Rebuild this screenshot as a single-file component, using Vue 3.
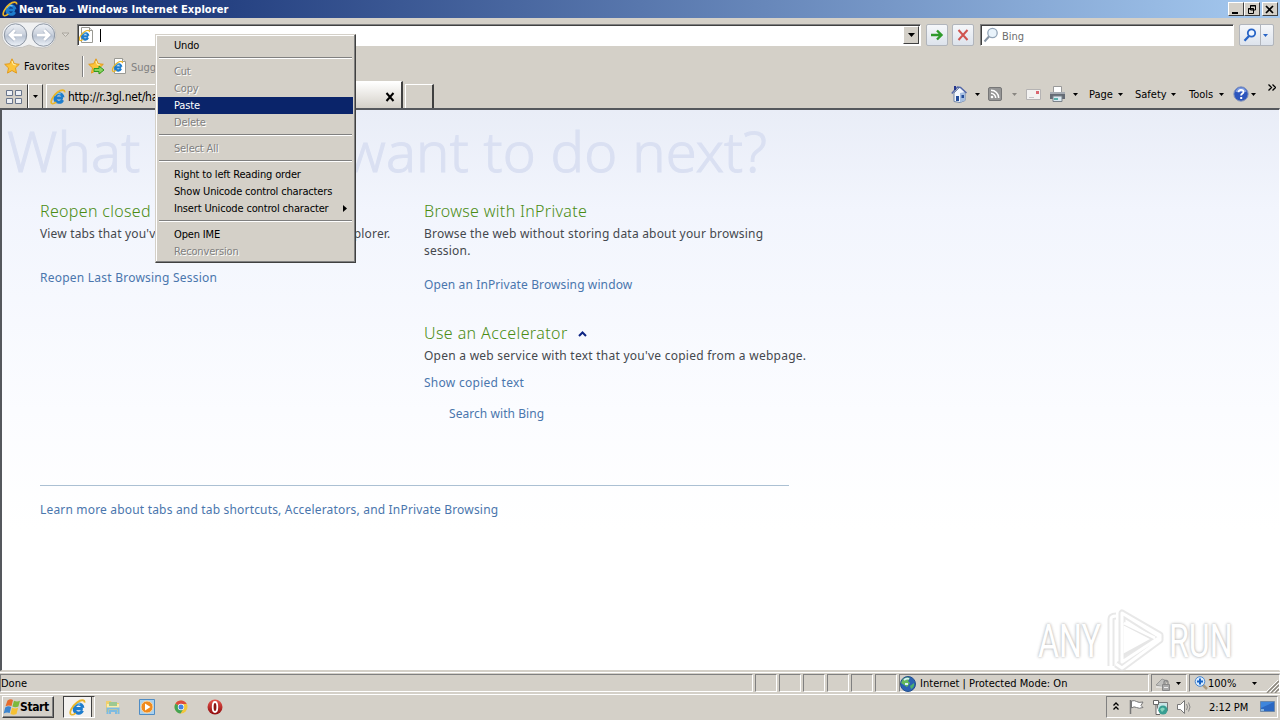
<script setup>
const menu = [
  { label: 'Undo' },
  { sep: true },
  { label: 'Cut', off: true },
  { label: 'Copy', off: true },
  { label: 'Paste', active: true },
  { label: 'Delete', off: true },
  { sep: true },
  { label: 'Select All', off: true },
  { sep: true },
  { label: 'Right to left Reading order' },
  { label: 'Show Unicode control characters' },
  { label: 'Insert Unicode control character', sub: true },
  { sep: true },
  { label: 'Open IME' },
  { label: 'Reconversion', off: true },
];
</script>

<template>
  <div class="screen">
    <!-- shared icons -->
    <svg class="defs" width="0" height="0">
      <defs>
        <linearGradient id="ball" x1="0" y1="0" x2="0" y2="1">
          <stop offset="0" stop-color="#eef1f6" />
          <stop offset="0.45" stop-color="#ccd3de" />
          <stop offset="0.55" stop-color="#bac4d3" />
          <stop offset="1" stop-color="#eef3f9" />
        </linearGradient>
        <linearGradient id="opera" x1="0" y1="0" x2="0" y2="1">
          <stop offset="0" stop-color="#e8564e" />
          <stop offset="1" stop-color="#8f0a0c" />
        </linearGradient>
        <symbol id="ie" viewBox="0 0 16 16">
          <path d="M13 9H5.200M5 9a4 4 0 0 1 8-.6M5 9a4 4 0 0 0 7.600 2" fill="none" stroke="#1d7ccd" stroke-width="3" />
          <path d="M4.600 6.800a4.600 4.600 0 0 1 6-2" fill="none" stroke="#6fc3f4" stroke-width="1.400" />
          <path d="M2 14.600C-.4 13 3 6.500 7.500 3.200 11 .7 15 .2 14.600 3.400" fill="none" stroke="#eab528" stroke-width="1.700" />
          <path d="M2 14.600c1.300.6 3-.4 4.300-1.400" fill="none" stroke="#eab528" stroke-width="1.500" />
        </symbol>
        <symbol id="iepage" viewBox="0 0 16 16">
          <path d="M3.500.5h8l3 3v12h-11z" fill="#fff" stroke="#9a9a94" />
          <path d="M11.500.5v3h3" fill="#e8e8e8" stroke="#9a9a94" />
          <use href="#ie" x="0.500" y="2.500" width="12" height="12" />
        </symbol>
        <symbol id="star" viewBox="0 0 16 16">
          <path d="M8 .8l2.200 4.900 5.100.6-3.800 3.600 1 5.200L8 12.500l-4.500 2.600 1-5.200L.7 6.300l5.100-.6z" fill="#fcc43a" stroke="#e29a1c" />
          <path d="M8 3l1.300 3.500 2.500.4" fill="none" stroke="#fff3b4" />
        </symbol>
      </defs>
    </svg>

    <header class="titlebar">
      <svg width="16" height="16"><use href="#ie" /></svg>
      <span class="title">New Tab - Windows Internet Explorer</span>
      <div class="winbtns">
        <button><svg width="13" height="11"><path d="M3 8h6v2H3z" /></svg></button>
        <button><svg width="13" height="11"><path d="M5.500 1.500h5v4.500h-5zM5 2h6M3.500 4.500h5v5h-5zM3 5h6" fill="#d4d0c8" stroke="#000" /></svg></button>
        <button class="close"><svg width="13" height="11"><path d="M3 2l7 7M10 2L3 9" stroke="#000" stroke-width="1.700" /></svg></button>
      </div>
    </header>

    <div class="navrow">
      <svg class="backfwd" width="58" height="28">
        <path d="M15 1h28a13 13 0 0 1 0 26q-8 0-14-3-6 3-14 3A13 13 0 0 1 15 1z" fill="#f0f1f2" stroke="#c6c4c0" />
        <circle cx="15.500" cy="14" r="11.200" fill="url(#ball)" stroke="#8c95a2" />
        <circle cx="43.500" cy="14" r="11.200" fill="url(#ball)" stroke="#8c95a2" />
        <path d="M22 14H10.500M15 9l-5 5 5 5" fill="none" stroke="#a3aec0" stroke-width="4" />
        <path d="M22 14H10.500M15 9l-5 5 5 5" fill="none" stroke="#fff" stroke-width="2.800" />
        <path d="M37 14h11.500M44 9l5 5-5 5" fill="none" stroke="#a3aec0" stroke-width="4" />
        <path d="M37 14h11.500M44 9l5 5-5 5" fill="none" stroke="#fff" stroke-width="2.800" />
      </svg>
      <svg class="hist" width="9" height="6"><path d="M1 1h7L4.500 4.500z" fill="#dedbd5" stroke="#aaa69e" /></svg>
      <div class="address">
        <svg width="16" height="16"><use href="#iepage" /></svg>
        <i class="caret"></i>
        <button class="drop"><svg width="7" height="4"><path d="M0 0h7L3.500 4z" /></svg></button>
      </div>
      <button class="flat go"><svg width="14" height="14"><path d="M1 7h10M7 2.500L11.500 7 7 11.500" fill="none" stroke="#2f9a2c" stroke-width="2.400" /></svg></button>
      <button class="flat stop"><svg width="14" height="14"><path d="M2.500 2l9 10M11.500 2l-9 10" fill="none" stroke="#d0544f" stroke-width="2" /></svg></button>
      <div class="search">
        <svg width="16" height="16"><circle cx="9.500" cy="6" r="4.700" fill="#e9f3fb" stroke="#93a5b8" stroke-width="1.300" /><path d="M6 9.500L1.500 14.500" stroke="#8795a5" stroke-width="2" /></svg>
        <span>Bing</span>
      </div>
      <div class="flat searchbtn">
        <svg width="14" height="14"><circle cx="8.500" cy="5" r="3.700" fill="#eef5ff" stroke="#2764c6" stroke-width="1.800" /><path d="M6 8l-4.500 4.700" stroke="#2764c6" stroke-width="2.300" /></svg>
        <i></i>
        <svg width="5" height="3"><path d="M0 0h5L2.500 3z" fill="#2764c6" /></svg>
      </div>
    </div>

    <div class="favrow">
      <svg width="16" height="16"><use href="#star" /></svg>
      <span class="fav">Favorites</span>
      <i class="bar"></i>
      <svg class="addfav" width="17" height="17">
        <use href="#star" width="16" height="16" />
        <path d="M6 10.500h5v-2.500l5 4-5 4v-2.500H6z" fill="#8ad35f" stroke="#2d9a1c" />
      </svg>
      <svg class="sugicon" width="16" height="16"><use href="#iepage" /></svg>
      <span class="sug">Suggested Sites</span>
    </div>

    <div class="tabrow">
      <div class="quick">
        <svg width="16" height="14" fill="#eef1f6" stroke="#69758c"><path d="M.5.5h6v5h-6zM9.500.5h6v5h-6zM.5 8.500h6v5h-6zM9.500 8.500h6v5h-6z" /></svg>
      </div>
      <div class="quickdrop"><svg width="5" height="3"><path d="M0 0h5L2.500 3z" /></svg></div>
      <div class="tab">
        <svg width="16" height="16"><use href="#ie" /></svg>
        <span>http://r.3gl.net/hawk</span>
      </div>
      <div class="tab current">
        <svg width="10" height="10"><path d="M1.500 1l7 8M8.500 1l-7 8" stroke="#000" stroke-width="2" /></svg>
      </div>
      <div class="newtab"></div>

      <div class="commands">
        <svg class="home" width="17" height="18">
          <path d="M3 8v8.500l6 1 5-2V7L9 2z" fill="#f2f6fc" stroke="#7286a8" />
          <path d="M9 8l5-1v8.500l-5 2z" fill="#a6bee0" />
          <path d="M.8 8.500L6.500 2l3 .5 6 5.500" fill="none" stroke="#5468a8" stroke-width="1.600" />
          <path d="M3 1h2v4H3z" fill="#26368d" />
          <path d="M5 11h3v5H5zM10.500 10h2.500v3h-2.500z" fill="#244d9a" />
        </svg>
        <svg class="dd" width="5" height="3"><path d="M0 0h5L2.500 3z" /></svg>
        <svg class="rss" width="14" height="14">
          <rect x=".5" y=".5" width="13" height="13" rx="1.500" fill="#969696" stroke="#777" />
          <circle cx="4" cy="10" r="1.300" fill="#fff" />
          <path d="M3 6.300a4.700 4.700 0 0 1 4.700 4.700M3 3.300A7.700 7.700 0 0 1 10.700 11" fill="none" stroke="#fff" stroke-width="1.500" />
        </svg>
        <svg class="dd dim" width="5" height="3"><path d="M0 0h5L2.500 3z" /></svg>
        <svg class="mail" width="15" height="11"><path d="M.5.500h14v10H.5z" fill="#f3f2f1" stroke="#b5b3b3" /><path d="M3 8.500h5" stroke="#c5c5c8" /><path d="M10 2h3v3h-3z" fill="#da6670" /></svg>
        <svg class="print" width="17" height="17">
          <path d="M4.500.5h8v6h-8z" fill="#fff" stroke="#999" />
          <path d="M1 6h15v7H1z" fill="#656b75" />
          <path d="M1 6h15v2H1z" fill="#a7acb3" />
          <path d="M4 10h9v5.500H4z" fill="#dbe9f2" stroke="#7b8289" />
          <path d="M5 13h4" stroke="#2f9c94" stroke-width="1.500" />
        </svg>
        <svg class="dd d3" width="5" height="3"><path d="M0 0h5L2.500 3z" /></svg>
        <span class="page">Page</span>
        <svg class="dd d4" width="5" height="3"><path d="M0 0h5L2.500 3z" /></svg>
        <span class="safety">Safety</span>
        <svg class="dd d4" width="5" height="3"><path d="M0 0h5L2.500 3z" /></svg>
        <span class="tools">Tools</span>
        <svg class="dd d4" width="5" height="3"><path d="M0 0h5L2.500 3z" /></svg>
        <svg class="help" width="16" height="16">
          <circle cx="8" cy="8" r="7.200" fill="#2c55bd" stroke="#8796ba" />
          <path d="M2.500 6a5.500 4.500 0 0 1 11 0z" fill="#7c9ae0" />
          <path d="M5.500 6.300c0-3.300 5-3.200 5-.4 0 1.700-2.400 1.700-2.400 3.700" fill="none" stroke="#fff" stroke-width="1.800" />
          <path d="M7.200 11h2v2h-2z" fill="#fff" />
        </svg>
        <svg class="dd d5" width="5" height="3"><path d="M0 0h5L2.500 3z" /></svg>
        <svg class="more" width="8" height="7"><path d="M.5.500l3 3-3 3M4.500.5l3 3-3 3" fill="none" stroke="#000" stroke-width="1.300" /></svg>
      </div>
    </div>

    <main class="page-body">
      <h1>What do you want to do next?</h1>
      <div class="cols">
        <section class="col1">
          <h2>Reopen closed tabs</h2>
          <p class="view">View tabs that you've closed since opening Internet Explorer.</p>
          <a class="a-reopen">Reopen Last Browsing Session</a>
        </section>
        <section class="col2">
          <h2>Browse with InPrivate</h2>
          <p>Browse the web without storing data about your browsing<br>session.</p>
          <a class="a-inp">Open an InPrivate Browsing window</a>
          <h2 class="h-acc">Use an Accelerator <svg width="9" height="6"><path d="M1 5l3.500-3.500L8 5" fill="none" stroke="#0c2383" stroke-width="2" /></svg></h2>
          <p class="p-acc">Open a web service with text that you've copied from a webpage.</p>
          <a class="a-show">Show copied text</a>
          <a class="a-bing">Search with Bing</a>
        </section>
      </div>
      <div class="learn"><a>Learn more about tabs and tab shortcuts, Accelerators, and InPrivate Browsing</a></div>

      <div class="watermark">
        <span class="any">ANY</span>
        <svg width="58" height="66" viewBox="0 0 58 66">
          <g fill="none" stroke-linejoin="round">
            <path d="M5 58V11q0-3 5-3M16 5v49l38-25zM16 5l38 22v5L16 60l-6-4" stroke="#d9d9d9" stroke-width="7" opacity=".6" />
            <path d="M16 15l31 16L16 48z" fill="#fff" stroke="#e6e6e6" stroke-width="3" />
            <path d="M5 58V11q0-3 5-3M16 5v49l38-25zM16 5l38 22v5L16 60l-6-4M18 15l31 15" stroke="#fff" stroke-width="3" />
          </g>
        </svg>
        <span class="run">RUN</span>
      </div>
    </main>

    <footer class="status">
      <div class="pane done">Done</div>
      <div v-for="n in 6" :key="n" class="pane small"></div>
      <div class="pane zone">
        <svg width="16" height="16">
          <circle cx="8" cy="8" r="7.500" fill="#2b62b4" stroke="#234f8d" />
          <path d="M3 3q4-3 7-1l-2 3 2 2-3 4-3-2-3-2z" fill="#64b95b" />
          <path d="M10 10l4-3q1 4-3 6z" fill="#4eaf6e" />
          <path d="M4 4q3-2 5-1M5 8h3" stroke="#d5f0fb" fill="none" stroke-width="1.800" />
        </svg>
        <span>Internet | Protected Mode: On</span>
      </div>
      <div class="pane lock">
        <svg width="17" height="16">
          <path d="M1 9l6-6 5 2-4 6z" fill="#c0c0be" stroke="#9a9a98" />
          <path d="M1 11h7" stroke="#f5f5f5" />
          <path d="M7.500 8.500h7v6h-7z" fill="#aaa" stroke="#888" />
          <path d="M9 8V6.500a2 2 0 0 1 4 0V8" fill="none" stroke="#888" stroke-width="1.300" />
          <path d="M9 11.500h4" stroke="#eee" />
        </svg>
        <svg width="5" height="3"><path d="M0 0h5L2.500 3z" /></svg>
      </div>
      <div class="pane zoom">
        <svg width="14" height="15"><path d="M9 9l4 4" stroke="#ae9c80" stroke-width="2.500" /><circle cx="6" cy="5.500" r="4.800" fill="#d9ecff" stroke="#4785ce" /><path d="M3 5.500h6M6 2.500v6" stroke="#1561c4" stroke-width="2" /></svg>
        <span>100%</span>
        <svg class="zd" width="5" height="3"><path d="M0 0h5L2.500 3z" /></svg>
        <svg class="grip" width="13" height="13"><path d="M1 13L13 1M5 13l8-8M9 13l4-4" stroke="#8a867e" stroke-width="1.500" /><path d="M0 12L12 0M4 12l9-9M8 12l5-5" stroke="#fff" /></svg>
      </div>
    </footer>

    <div class="taskbar">
      <button class="start">
        <svg width="18" height="16">
          <path d="M4.500 1.500q3-2 5.500-.5L8.500 7q-3-1.300-6 .3z" fill="#e66b2c" />
          <path d="M11 1.800q3 1.500 6 0l-1.600 5.800q-3 1.500-6 0z" fill="#7cb93d" />
          <path d="M2.200 8.500q3-2 6-.5l-1.500 6q-3-1.300-6 .5z" fill="#3c85cf" />
          <path d="M9 8.800q3 1.500 6.100 0L13.500 15q-3 1.500-6 0z" fill="#f6c132" />
        </svg>
        <span>Start</span>
      </button>
      <div class="running"><div class="runin"><svg width="17" height="17"><use href="#ie" /></svg></div></div>
      <svg class="explorer" width="16" height="16">
        <path d="M1 2h5l1 2h7v9H1z" fill="#f0cf6c" />
        <path d="M2 5h12v5H2z" fill="#fbeba9" />
        <path d="M4 3h8v4H4z" fill="#9cc992" />
        <path d="M2.500 15v-5.500h11V15M5 15v-3h6v3" fill="none" stroke="#7dbbe2" stroke-width="2" />
      </svg>
      <svg class="wmp" width="16" height="16">
        <path d="M.5.5h15v15H.5z" fill="#a9d1ef" stroke="#4f8cc4" />
        <circle cx="8" cy="8" r="6" fill="#f08a1d" stroke="#fbd7a5" />
        <path d="M6 4.500v7L11.500 8z" fill="#fff" />
      </svg>
      <svg class="chrome" width="14" height="14" viewBox="0 0 14 14">
        <circle cx="7" cy="7" r="6.500" fill="#f2c63c" />
        <path d="M7 7L1.400 3.700A6.500 6.500 0 0 1 12.700 4H7z" fill="#dd4b3e" />
        <path d="M7 7L1.400 3.700A6.500 6.500 0 0 0 6.500 13.500L9.600 8.500z" fill="#44a354" />
        <circle cx="7" cy="7" r="3.200" fill="#fff" />
        <circle cx="7" cy="7" r="2.500" fill="#4482e2" />
      </svg>
      <svg class="op" width="16" height="16"><circle cx="8" cy="8" r="7.500" fill="url(#opera)" /><ellipse cx="8" cy="8" rx="2.300" ry="5" fill="#8c1512" stroke="#fff" stroke-width="1.800" /></svg>

      <div class="tray">
        <svg class="chev" width="6" height="8"><path d="M.5 3.500L3 1l2.500 2.500M.5 7.500L3 5l2.500 2.500" fill="none" stroke="#000" stroke-width="1.300" /></svg>
        <svg class="flag" width="17" height="16"><path d="M2.500 1v14" stroke="#777" stroke-width="1.500" /><path d="M3.500 2q3-1 5 .5t6.500.5l-2 3.500 2 2q-4 1.500-6.500 0t-5 .5z" fill="#fff" stroke="#777" /></svg>
        <svg class="net" width="17" height="16">
          <path d="M5.500 3.500h10v8h-10z" fill="#c8e6e6" stroke="#777" />
          <path d="M1.500 1.500h5v4h-5zM4 6v9.500h4" fill="#fff" stroke="#666" />
          <circle cx="11" cy="11" r="4.500" fill="#389e92" /><path d="M8 10q3-3 5 0l-3 3z" fill="#84d4bc" />
        </svg>
        <svg class="vol" width="17" height="16"><path d="M1.500 5.500h3l4-4v13l-4-4h-3z" fill="#fff" stroke="#777" /><path d="M10.500 5q2 3 0 6M12.500 3.500q3 4.500 0 9" fill="none" stroke="#888" /></svg>
        <span>2:12 PM</span>
        <svg class="desk" width="15" height="12"><path d="M.5.500h14v10H.5z" fill="#2b68c2" stroke="#6d88a8" /><path d="M1 1h13L1 7z" fill="#3f86dc" /><path d="M1 9h3" stroke="#dff" /></svg>
      </div>
    </div>

    <div class="menu">
      <template v-for="(m, i) in menu" :key="i">
        <div v-if="m.sep" class="sep"></div>
        <div v-else class="item" :class="{ off: m.off, active: m.active }">
          <span>{{ m.label }}</span>
          <svg v-if="m.sub" width="4" height="7"><path d="M0 0v7L4 3.500z" /></svg>
        </div>
      </template>
    </div>
  </div>
</template>

<style>
body {
  margin: 0;
  overflow: hidden;
}
</style>

<style scoped>
.screen {
  position: relative;
  width: 1280px;
  height: 720px;
  overflow: hidden;
  display: flex;
  flex-direction: column;
  background: #d4d0c8;
  color: #000;
  font: 11px/14px Tahoma, "DejaVu Sans Condensed", "DejaVu Sans", sans-serif;
  letter-spacing: 0;
  white-space: nowrap;
}
.screen * {
  box-sizing: border-box;
}
svg {
  display: block;
  flex: none;
}
.defs {
  position: absolute;
}
button {
  padding: 0;
  font: inherit;
  letter-spacing: inherit;
  color: inherit;
}
.titlebar {
  height: 18px;
  flex: none;
  display: flex;
  align-items: center;
  padding: 0 2px;
  background: linear-gradient(90deg, #0a246a, #a6caf0);
  color: #fff;
}
.title {
  font-weight: bold;
  margin: 1px 0 0 1px;
  letter-spacing: 0.06px;
}
.winbtns {
  margin-left: auto;
  display: flex;
}
.winbtns button {
  width: 16px;
  height: 14px;
  border: 1px solid;
  border-color: #fff #404040 #404040 #fff;
  background: #d4d0c8;
}
.winbtns .close {
  margin-left: 2px;
}
.navrow {
  height: 34px;
  flex: none;
  display: flex;
  align-items: center;
}
.hist {
  margin-left: 3px;
}
.address {
  display: flex;
  align-items: center;
  width: 844px;
  height: 22px;
  margin-left: 7px;
  padding: 0 1px 0 0;
  background: #fff;
  border: 1px solid;
  border-color: #808080 #fff #fff #808080;
  box-shadow: inset 1px 1px #404040;
}
.caret {
  width: 1px;
  height: 13px;
  margin-left: 6px;
  background: #000;
}
.drop {
  display: flex;
  align-items: center;
  justify-content: center;
  width: 16px;
  height: 18px;
  margin-left: auto;
  background: #d4d0c8;
  border: 1px solid;
  border-color: #fff #404040 #404040 #fff;
}
.flat {
  display: flex;
  align-items: center;
  justify-content: center;
  width: 22px;
  height: 22px;
  border: 1px solid #b1b5bc;
  border-radius: 2px;
  background: linear-gradient(#f5f7fa, #dde3ec);
}
.go {
  margin-left: 5px;
}
.stop {
  margin-left: 4px;
}
.search {
  display: flex;
  align-items: center;
  width: 254px;
  height: 22px;
  margin-left: 6px;
  padding-left: 2px;
  background: #fff;
  border: 1px solid;
  border-color: #808080 #fff #fff #808080;
  box-shadow: inset 1px 1px #404040;
  color: #6d6d6d;
}
.search span {
  margin: 3px 0 0 3px;
}
.searchbtn {
  width: 35px;
  margin-left: 5px;
  justify-content: space-between;
  padding: 0 5px 0 3px;
}
.searchbtn i {
  width: 1px;
  height: 20px;
  margin-left: 1px;
  background: #b1b5bc;
}
.favrow {
  height: 28px;
  flex: none;
  display: flex;
  align-items: center;
  padding-left: 4px;
}
.fav {
  width: 47px;
  margin: 1px 0 0 4px;
  letter-spacing: 0.1px;
}
.bar {
  width: 2px;
  height: 21px;
  margin-left: 11px;
  border-left: 1px solid #808080;
  border-right: 1px solid #fff;
}
.addfav {
  margin-left: 4px;
}
.sugicon {
  margin-left: 6px;
}
.sug {
  margin: 3px 0 0 4px;
  color: #808080;
}
.tabrow {
  height: 28px;
  flex: none;
  display: flex;
  align-items: flex-end;
}
.quick,
.quickdrop,
.newtab {
  height: 24px;
  display: flex;
  align-items: center;
  justify-content: center;
  border-top: 1px solid #fff;
  border-right: 1px solid #404040;
}
.quick {
  width: 28px;
}
.quickdrop {
  width: 15px;
  border-left: 1px solid #fff;
}
.newtab {
  width: 29px;
  margin-left: 2px;
  border-left: 1px solid #fff;
  border-right-width: 2px;
}
.tab {
  display: flex;
  align-items: center;
  height: 24px;
  width: 173px;
  margin-left: 3px;
  padding-left: 3px;
  overflow: hidden;
  border-top: 1px solid #fff;
  border-left: 1px solid #fff;
}
.tab span {
  margin: 1px 0 0 2px;
  font-size: 12px;
  letter-spacing: -0.25px;
}
.current {
  height: 27px;
  width: 184px;
  margin-left: 0;
  justify-content: flex-end;
  padding: 3px 6px 0 0;
  background: linear-gradient(#fff, #d4d0c8);
  border-right: 2px solid #404040;
}
.commands {
  display: flex;
  align-items: center;
  height: 28px;
  margin-left: auto;
  padding-right: 4px;
}
.dd {
  margin-left: 7px;
}
.rss {
  margin-left: 8px;
}
.dim {
  margin-left: 10px;
  opacity: 0.35;
}
.mail {
  margin-left: 9px;
}
.print {
  margin-left: 8px;
}
.d3 {
  margin-left: 7px;
}
.page {
  width: 25px;
  margin: 1px 0 0 11px;
}
.safety {
  width: 32px;
  margin: 1px 0 0 12px;
}
.tools {
  width: 26px;
  margin: 1px 0 0 13px;
}
.d4 {
  margin-left: 4px;
}
.help {
  margin-left: 9px;
}
.d5 {
  margin-left: 2px;
}
.more {
  margin: 0 0 13px 12px;
}
.page-body {
  position: relative;
  flex: none;
  height: 563px;
  border-top: 2px solid #55585d;
  border-left: 2px solid #55585d;
  border-right: 1px solid #fff;
  border-bottom: 1px solid #d4d0c8;
  background: linear-gradient(#e9edf7, #f2f5fd 100px, #fbfcff 300px, #fff 420px);
  font-family: "Segoe UI", "Noto Sans", sans-serif;
  font-size: 12px;
  line-height: 17px;
  letter-spacing: 0.2px;
  color: #45484d;
}
h1 {
  margin: 0 0 0 5px;
  height: 82px;
  font-size: 56px;
  line-height: 80px;
  font-weight: 300;
  color: #dae0f2;
  letter-spacing: 0.15px;
  -webkit-text-stroke: 1px #dae0f2;
}
h2 {
  margin: 0;
  font-size: 16px;
  line-height: 22px;
  font-weight: 300;
  letter-spacing: 0.32px;
  color: #4a8c13;
}
p {
  margin: 3px 0 0;
}
a {
  display: block;
  color: #4a76ad;
}
.cols {
  display: grid;
  grid-template-columns: 384px 400px;
  padding: 8px 0 0 38px;
}
.view {
  letter-spacing: 0.16px;
}
.a-reopen {
  margin-top: 27px;
  letter-spacing: 0.23px;
}
.a-inp {
  margin-top: 17px;
  letter-spacing: 0.11px;
}
.h-acc {
  display: flex;
  align-items: center;
  margin-top: 29px;
  letter-spacing: 0.4px;
}
.h-acc svg {
  margin: 2px 0 0 10px;
}
.p-acc {
  letter-spacing: 0.25px;
}
.a-show {
  margin-top: 10px;
  letter-spacing: 0.27px;
}
.a-bing {
  margin: 14px 0 0 25px;
  letter-spacing: 0.06px;
}
.learn {
  width: 749px;
  margin: 63px 0 0 38px;
  padding-top: 15px;
  border-top: 1px solid #abc0d3;
  letter-spacing: 0.18px;
}
.watermark {
  position: absolute;
  left: 1036px;
  top: 498px;
  display: flex;
  align-items: center;
  height: 66px;
  font: 46px/46px Roboto, sans-serif;
  letter-spacing: 0;
  color: #fff;
  text-shadow: 0 0 3px #bbb, 0 0 4px #ccc;
}
.watermark span {
  width: 64px;
  transform-origin: left center;
  transform: scaleX(0.7);
}
.watermark svg {
  margin: 0 5px 0 4px;
}
.status {
  flex: none;
  height: 20px;
  display: flex;
  gap: 2px;
  padding-top: 1px;
  margin-top: 1px;
  border-top: 1px solid #fff;
}
.pane {
  display: flex;
  align-items: center;
  height: 18px;
  padding-top: 1px;
  border: 1px solid;
  border-color: #808080 #fff #fff #808080;
}
.done {
  width: 753px;
}
.small {
  width: 22px;
}
.zone {
  width: 250px;
  padding-left: 0;
}
.zone span {
  margin-left: 4px;
  letter-spacing: 0.02px;
}
.lock {
  width: 36px;
  padding-left: 3px;
  gap: 4px;
}
.zoom {
  flex: 1;
  padding-left: 4px;
}
.zd {
  margin-left: 16px;
}
.grip {
  margin: 5px 0 0 auto;
}
.taskbar {
  flex: none;
  height: 25px;
  display: flex;
  align-items: center;
  margin-top: 2px;
  border-top: 1px solid #fff;
}
.start {
  display: flex;
  align-items: center;
  width: 52px;
  height: 22px;
  margin-left: 2px;
  background: #d4d0c8;
  border: 1px solid;
  border-color: #fff #404040 #404040 #fff;
  box-shadow: inset -1px -1px #808080;
  font-weight: bold;
}
.start span {
  margin: 0 0 0 -1px;
  font-size: 12px;
  letter-spacing: -0.4px;
}
.running {
  width: 32px;
  height: 22px;
  margin-left: 9px;
  border: 1px solid;
  border-color: #404040 #fff #fff #404040;
}
.runin {
  display: flex;
  align-items: center;
  width: 28px;
  height: 20px;
  padding-left: 5px;
  background: #f4f2ef;
  border-right: 1px solid #404040;
}
.explorer {
  margin-left: 10px;
}
.wmp {
  margin-left: 18px;
}
.chrome {
  margin-left: 19px;
}
.op {
  margin-left: 19px;
}
.tray {
  display: flex;
  align-items: center;
  width: 172px;
  height: 22px;
  margin: 0 2px 0 auto;
  border: 1px solid;
  border-color: #808080 #fff #fff #808080;
}
.chev {
  margin: 0 0 2px 6px;
}
.flag {
  margin-left: 9px;
}
.net {
  margin-left: 7px;
}
.vol {
  margin-left: 7px;
}
.tray span {
  width: 40px;
  margin: 1px 0 0 16px;
  letter-spacing: -0.1px;
}
.desk {
  margin-left: 11px;
}
.menu {
  position: absolute;
  left: 155px;
  top: 34px;
  width: 201px;
  height: 229px;
  padding: 2px;
  background: #d4d0c8;
  border: 1px solid;
  border-color: #d4d0c8 #404040 #404040 #d4d0c8;
  box-shadow: inset -1px -1px #808080, inset 1px 1px #fff;
  letter-spacing: -0.16px;
}
.item {
  display: flex;
  align-items: center;
  height: 17px;
  padding: 0 6px 0 16px;
}
.item svg {
  margin-left: auto;
}
.off {
  color: #808080;
  text-shadow: 1px 1px #fff;
}
.active {
  background: #0a246a;
  color: #fff;
}
.sep {
  height: 2px;
  margin: 3px 1px 4px;
  border-top: 1px solid #808080;
  border-bottom: 1px solid #fff;
}
</style>
